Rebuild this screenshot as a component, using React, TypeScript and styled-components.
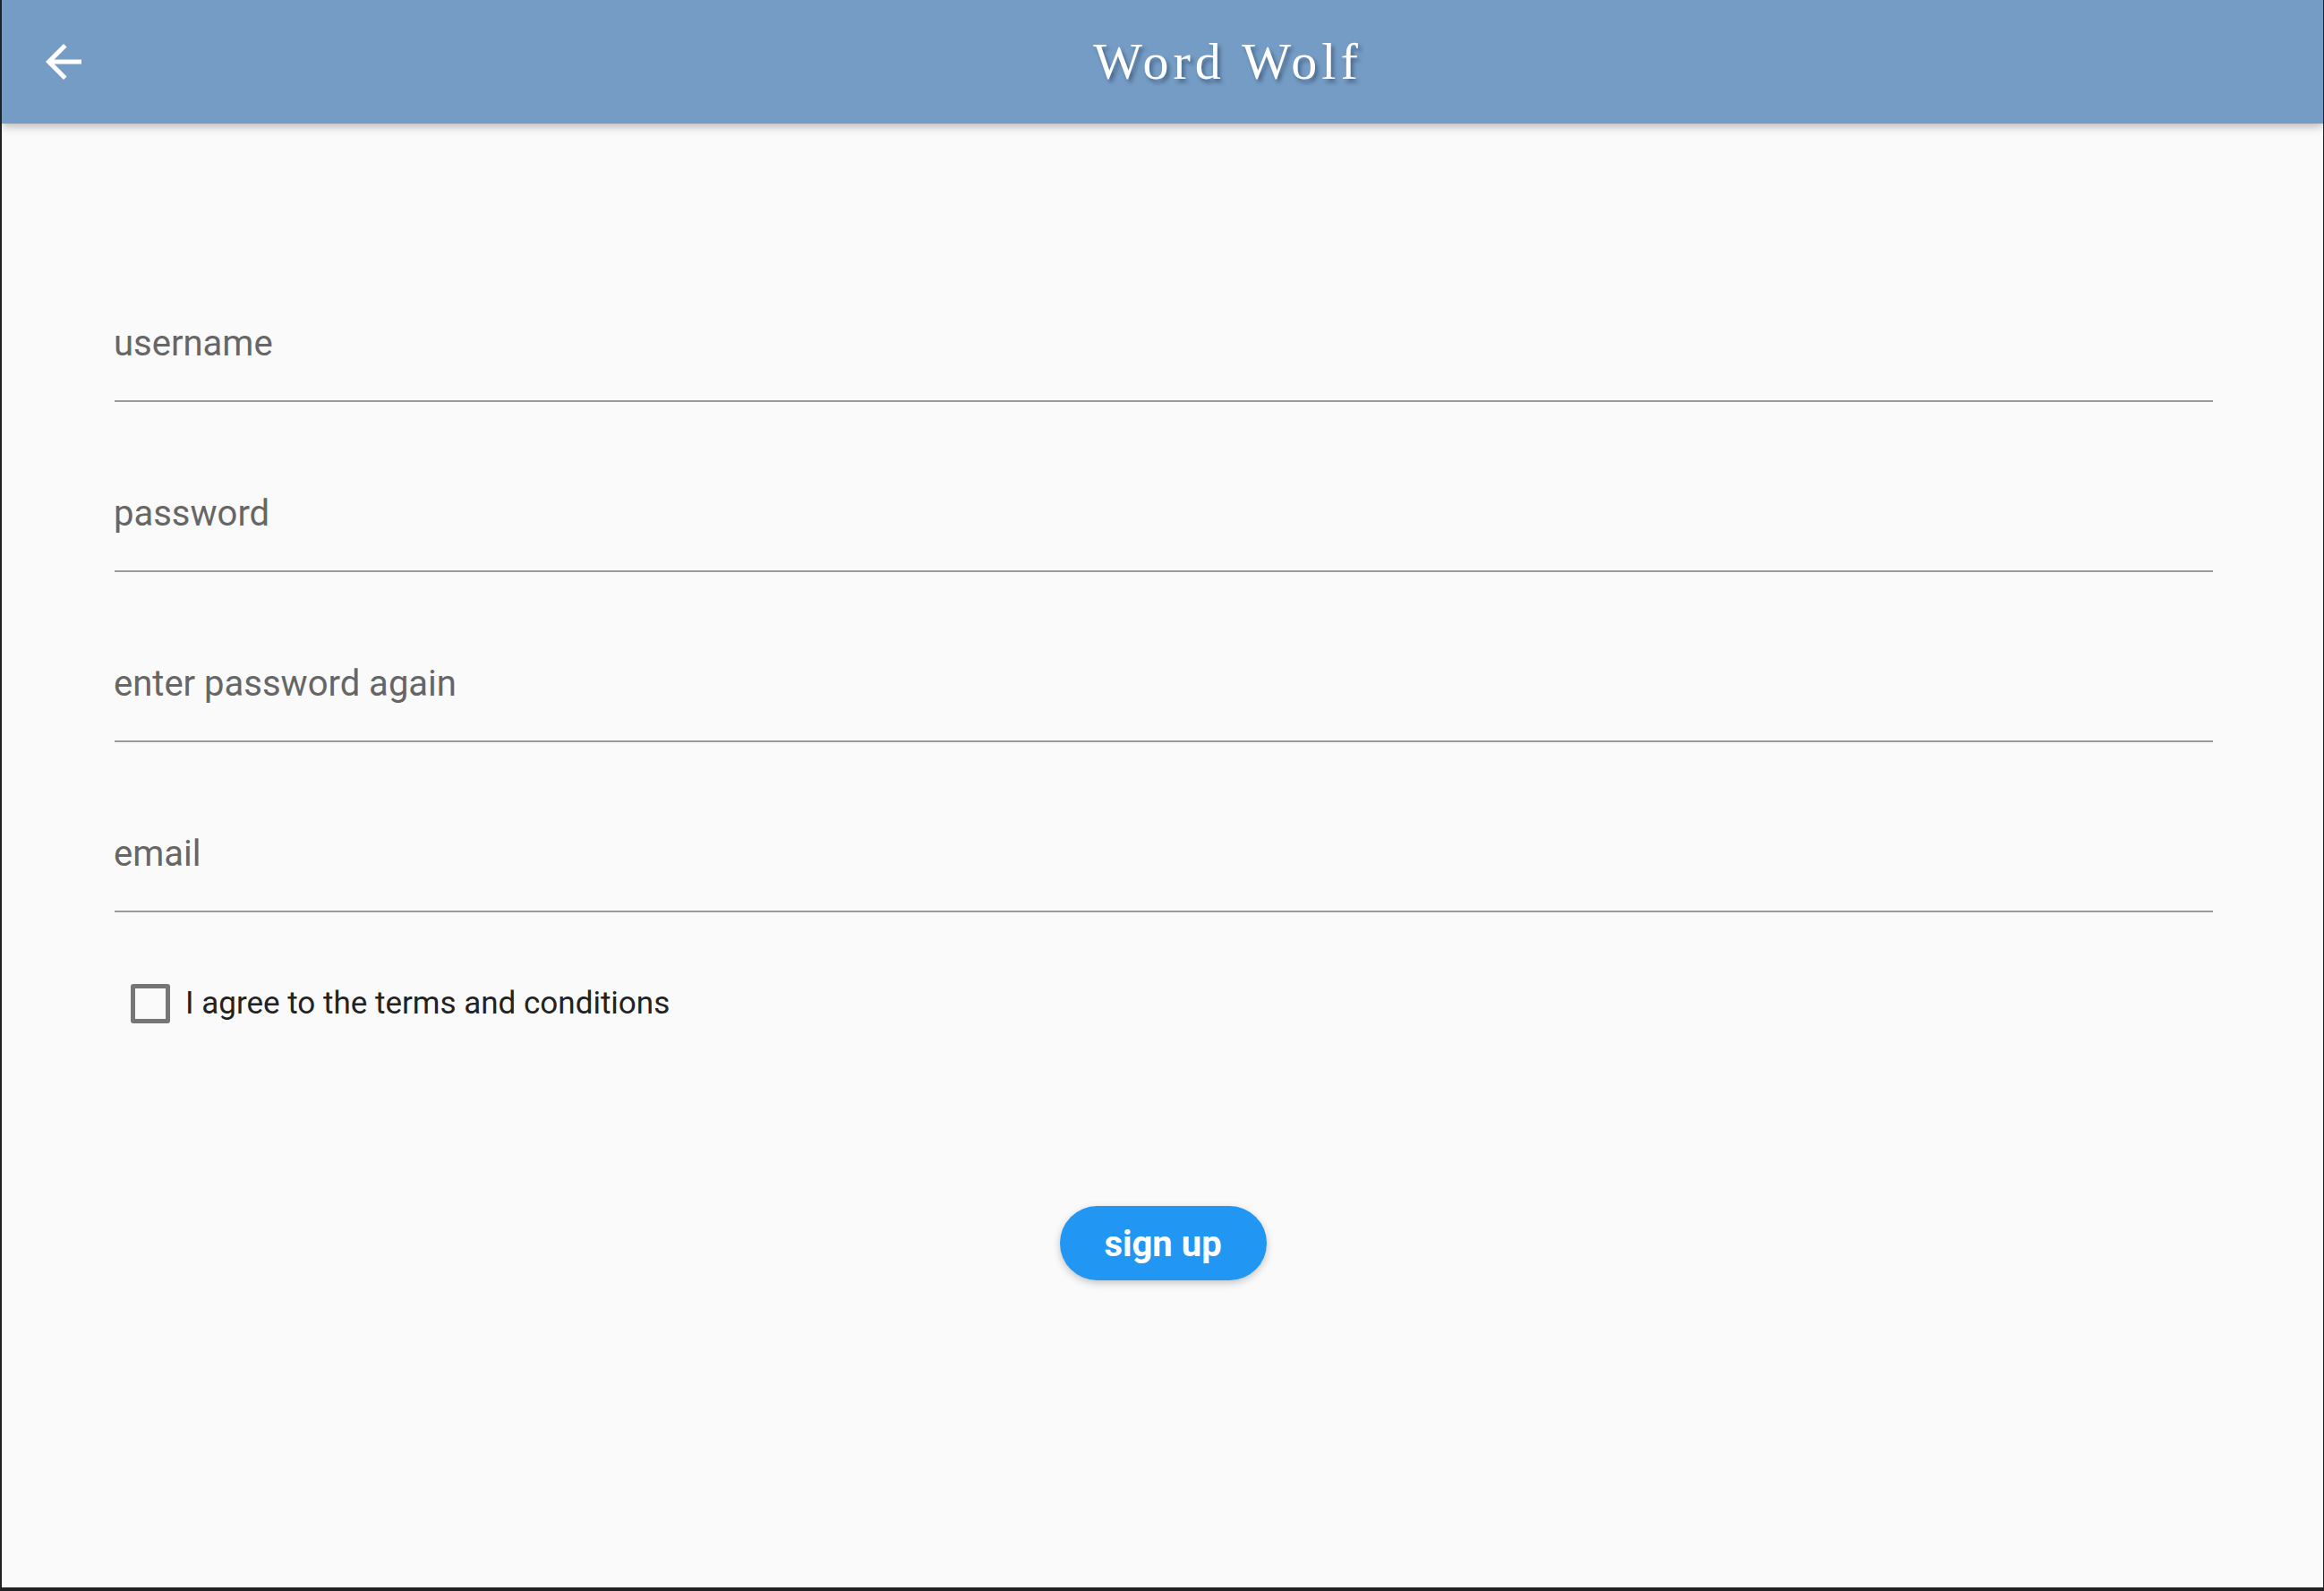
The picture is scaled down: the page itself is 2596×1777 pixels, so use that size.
import React from "react";
import styled, { createGlobalStyle } from "styled-components";

const Global = createGlobalStyle`
  html, body {
    margin: 0;
    padding: 0;
    background: #202124;
    overflow: hidden;
  }
  * { box-sizing: border-box; }
`;

const Frame = styled.div`
  width: 2596px;
  height: 1777px;
  padding: 0 1px 4px 2px;
  background: #202124;
`;

const Screen = styled.div`
  width: 100%;
  height: 100%;
  background: #fafafa;
  display: flex;
  flex-direction: column;
  overflow: hidden;
`;

const AppBar = styled.header`
  height: 138px;
  flex: none;
  background: #759cc4;
  display: flex;
  align-items: center;
  box-shadow: 0 3px 10px rgba(0, 0, 0, 0.28);
  position: relative;
  z-index: 1;
`;

const Leading = styled.button`
  width: 138px;
  height: 138px;
  flex: none;
  border: none;
  background: transparent;
  padding: 0;
  display: flex;
  align-items: center;
  justify-content: center;
  cursor: pointer;
`;

const Title = styled.h1`
  flex: 1;
  margin: 0;
  padding-left: 8px;
  text-align: center;
  font-family: "Liberation Serif", "Times New Roman", serif;
  font-weight: 400;
  font-size: 58px;
  line-height: 58px;
  letter-spacing: 5px;
  color: #ffffff;
  text-shadow: 3px 4px 4px rgba(20, 40, 70, 0.45);
`;

const Form = styled.main`
  flex: 1;
  padding: 121px 123px 0 126px;
  display: flex;
  flex-direction: column;
`;

const Field = styled.label`
  display: block;
  padding-top: 101px;
  padding-bottom: 40px;
  border-bottom: 2px solid #9a9a9a;
`;

const Placeholder = styled.span`
  display: block;
  font-family: Roboto, "Noto Sans", sans-serif;
  font-size: 40px;
  line-height: 47px;
  margin-left: -1px;
  color: #666666;
`;

const CheckRow = styled.div`
  display: flex;
  align-items: center;
  gap: 17px;
  margin-top: 80px;
  padding-left: 18px;
`;

const Box = styled.span`
  width: 44px;
  height: 44px;
  border: 5px solid #767676;
  border-radius: 3px;
  flex: none;
`;

const CheckText = styled.span`
  font-family: Roboto, "Noto Sans", sans-serif;
  font-size: 35px;
  line-height: 44px;
  color: #222222;
`;

const ButtonRow = styled.div`
  display: flex;
  justify-content: center;
  margin-top: 204px;
  padding-right: 2px;
`;

const PillButton = styled.button`
  width: 231px;
  height: 83px;
  border: none;
  border-radius: 42px;
  background: #2196f3;
  color: #ffffff;
  font-family: Roboto, "Noto Sans", sans-serif;
  font-weight: 700;
  font-size: 40px;
  padding: 2px 0 0;
  box-shadow: 0 3px 9px rgba(0, 0, 0, 0.22);
  cursor: pointer;
`;

const BackArrow = () => (
  <svg width="60" height="60" viewBox="0 0 24 24" fill="#ffffff" aria-hidden>
    <path d="M20 11H7.83l5.59-5.59L12 4l-8 8 8 8 1.41-1.41L7.83 13H20v-2z" />
  </svg>
);

const fields = ["username", "password", "enter password again", "email"];

export default function App() {
  return (
    <Frame>
      <Global />
      <Screen>
        <AppBar>
          <Leading aria-label="back">
            <BackArrow />
          </Leading>
          <Title>Word Wolf</Title>
        </AppBar>
        <Form>
          {fields.map((f) => (
            <Field key={f}>
              <Placeholder>{f}</Placeholder>
            </Field>
          ))}
          <CheckRow>
            <Box />
            <CheckText>I agree to the terms and conditions</CheckText>
          </CheckRow>
          <ButtonRow>
            <PillButton>sign up</PillButton>
          </ButtonRow>
        </Form>
      </Screen>
    </Frame>
  );
}
